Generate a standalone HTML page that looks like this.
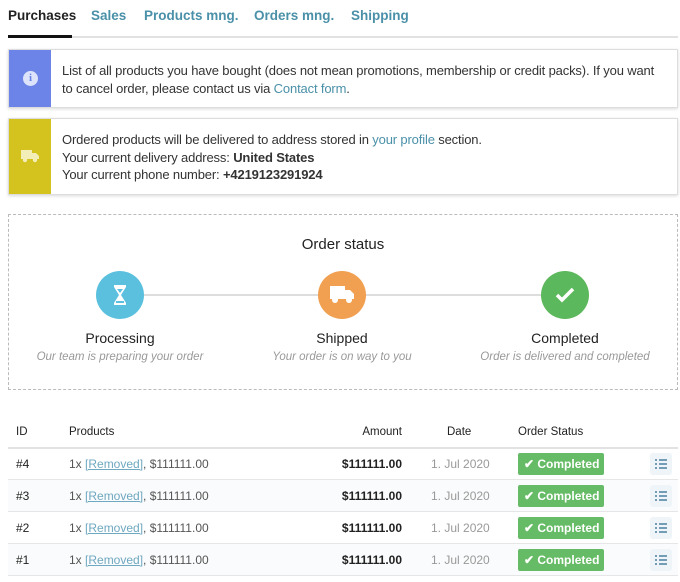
<!DOCTYPE html>
<html><head><style>
*{box-sizing:border-box;margin:0;padding:0}
body{width:680px;height:582px;background:#fff;font-family:"Liberation Sans",sans-serif;color:#222;font-size:13px;position:relative;overflow:hidden}
.a{position:absolute}
.tab{position:absolute;top:8px;font-size:13.5px;color:#4a90a8;font-weight:bold}
.box{position:absolute;left:8px;width:670px;border:1px solid #ddd;box-shadow:0 1px 3px rgba(0,0,0,.15);background:#fff}
.strip{position:absolute;left:0;top:0;bottom:0;width:42px}
.txt{position:absolute;left:53px;right:20px;line-height:17.5px;font-size:13px;color:#333;letter-spacing:-0.15px}
a{color:#4a90a8;text-decoration:none}
.c{position:absolute;width:48px;height:48px;border-radius:50%;top:271px}
.lbl{position:absolute;width:220px;text-align:center;font-size:14px;top:330px;color:#222}
.sub{position:absolute;width:220px;text-align:center;font-size:11.5px;font-style:italic;color:#999;top:351px}
.row{position:absolute;left:8px;width:670px;height:32px;border-bottom:1px solid #e6e6e6;font-size:12px}
.row span{position:absolute;top:9px}
.badge{position:absolute;left:510px;top:5px;width:86px;height:22px;background:#66bb66;color:#fff;font-weight:bold;border-radius:2px;font-size:12px;line-height:22px;padding-left:6px}
.li{position:absolute;left:642px;top:5px;width:22px;height:22px;background:#eef4f8;border-radius:3px}
</style></head><body>
<div class="tab" style="left:8px;color:#222">Purchases</div>
<div class="tab" style="left:91px">Sales</div>
<div class="tab" style="left:144px">Products mng.</div>
<div class="tab" style="left:254px">Orders mng.</div>
<div class="tab" style="left:351px">Shipping</div>
<div class="a" style="left:8px;top:36px;width:670px;height:2px;background:#e2e2e2"></div>
<div class="a" style="left:8px;top:35px;width:64px;height:3px;background:#111"></div>

<div class="box" style="top:49px;height:59px"><div class="strip" style="background:#6c84e8"></div>
<div class="a" style="left:14px;top:21px;width:15px;height:15px;border-radius:50%;background:#dde3fb;color:#6c84e8;font-size:11px;font-weight:bold;text-align:center;line-height:15px;font-family:'Liberation Serif',serif">i</div>
<div class="txt" style="top:12px">List of all products you have bought (does not mean promotions, membership or credit packs). If you want to cancel order, please contact us via <a>Contact form</a>.</div></div>

<div class="box" style="top:118px;height:77px"><div class="strip" style="background:#d4c21e"></div>
<svg class="a" style="left:12px;top:30px" width="18" height="14" viewBox="0 0 18 14"><rect x="0" y="1" width="11" height="9" fill="#f3eeb8"/><path d="M11 4h4l3 3v3h-7z" fill="#f3eeb8"/><circle cx="4" cy="11" r="2.2" fill="#f3eeb8"/><circle cx="14" cy="11" r="2.2" fill="#f3eeb8"/></svg>
<div class="txt" style="top:12px">Ordered products will be delivered to address stored in <a>your profile</a> section.<br>Your current delivery address: <b>United States</b><br>Your current phone number: <b>+4219123291924</b></div></div>

<div class="a" style="left:8px;top:214px;width:670px;height:176px;border:1px dashed #bbb"></div>
<div class="a" style="left:8px;top:236px;width:670px;text-align:center;font-size:15px">Order status</div>
<div class="a" style="left:120px;top:294px;width:445px;height:2px;background:#ddd"></div>
<div class="c" style="left:96px;background:#5bc0de"><svg class="a" style="left:16px;top:13px" width="16" height="22" viewBox="0 0 16 22"><path d="M2 1h12v2l-5 8 5 8v2H2v-2l5-8-5-8z" fill="#fff"/><path d="M4 17h8v2H4zM5 5h6l-3 4z" fill="#5bc0de"/></svg></div>
<div class="c" style="left:318px;background:#f0a050"><svg class="a" style="left:12px;top:15px" width="24" height="18" viewBox="0 0 24 18"><rect x="0" y="0" width="15" height="13" fill="#fff"/><path d="M15 4h5l4 4v5h-9z" fill="#fff"/><circle cx="5" cy="14" r="3" fill="#fff"/><circle cx="19" cy="14" r="3" fill="#fff"/></svg></div>
<div class="c" style="left:541px;background:#5cb85c"><svg class="a" style="left:14px;top:15px" width="20" height="18" viewBox="0 0 20 18"><path d="M2 9l5 5L18 3" stroke="#fff" stroke-width="3.5" fill="none"/></svg></div>
<div class="lbl" style="left:10px">Processing</div><div class="sub" style="left:10px">Our team is preparing your order</div>
<div class="lbl" style="left:232px">Shipped</div><div class="sub" style="left:232px">Your order is on way to you</div>
<div class="lbl" style="left:455px">Completed</div><div class="sub" style="left:455px">Order is delivered and completed</div>

<div class="a" style="left:8px;top:426px;width:670px;height:23px;border-bottom:2px solid #e2e2e2;font-size:11.5px">
<span class="a" style="left:8px">ID</span><span class="a" style="left:61px">Products</span><span class="a" style="left:330px;width:64px;text-align:right">Amount</span><span class="a" style="left:439px">Date</span><span class="a" style="left:510px">Order Status</span></div>

<div class="row" style="top:448px"><span style="left:8px">#4</span><span style="left:61px;color:#555">1x <a style="text-decoration:underline;color:#6fa8c0">[Removed]</a>, $111111.00</span><span style="left:300px;width:94px;text-align:right;font-weight:bold">$111111.00</span><span style="left:423px;color:#999">1. Jul 2020</span><div class="badge">✔ Completed</div><div class="li"><svg class="a" style="left:5px;top:6px" width="12" height="10"><path d="M0 1h2M0 5h2M0 9h2M4 1h8M4 5h8M4 9h8" stroke="#4a7fa0" stroke-width="1.5"/></svg></div></div>
<div class="row" style="top:480px;background:#fafbfc"><span style="left:8px">#3</span><span style="left:61px;color:#555">1x <a style="text-decoration:underline;color:#6fa8c0">[Removed]</a>, $111111.00</span><span style="left:300px;width:94px;text-align:right;font-weight:bold">$111111.00</span><span style="left:423px;color:#999">1. Jul 2020</span><div class="badge">✔ Completed</div><div class="li"><svg class="a" style="left:5px;top:6px" width="12" height="10"><path d="M0 1h2M0 5h2M0 9h2M4 1h8M4 5h8M4 9h8" stroke="#4a7fa0" stroke-width="1.5"/></svg></div></div>
<div class="row" style="top:512px"><span style="left:8px">#2</span><span style="left:61px;color:#555">1x <a style="text-decoration:underline;color:#6fa8c0">[Removed]</a>, $111111.00</span><span style="left:300px;width:94px;text-align:right;font-weight:bold">$111111.00</span><span style="left:423px;color:#999">1. Jul 2020</span><div class="badge">✔ Completed</div><div class="li"><svg class="a" style="left:5px;top:6px" width="12" height="10"><path d="M0 1h2M0 5h2M0 9h2M4 1h8M4 5h8M4 9h8" stroke="#4a7fa0" stroke-width="1.5"/></svg></div></div>
<div class="row" style="top:544px;background:#fafbfc"><span style="left:8px">#1</span><span style="left:61px;color:#555">1x <a style="text-decoration:underline;color:#6fa8c0">[Removed]</a>, $111111.00</span><span style="left:300px;width:94px;text-align:right;font-weight:bold">$111111.00</span><span style="left:423px;color:#999">1. Jul 2020</span><div class="badge">✔ Completed</div><div class="li"><svg class="a" style="left:5px;top:6px" width="12" height="10"><path d="M0 1h2M0 5h2M0 9h2M4 1h8M4 5h8M4 9h8" stroke="#4a7fa0" stroke-width="1.5"/></svg></div></div>
</body></html>
